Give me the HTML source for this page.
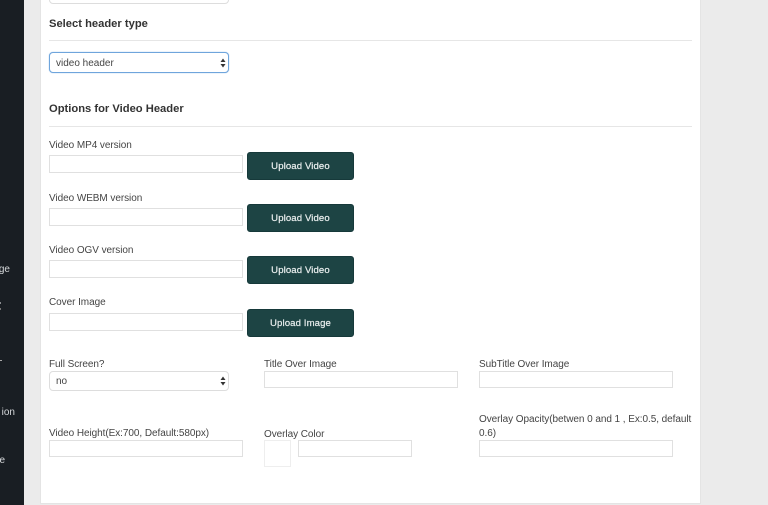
<!DOCTYPE html>
<html><head><meta charset="utf-8"><style>
html,body{margin:0;padding:0}
body{width:768px;height:505px;position:relative;overflow:hidden;background:#ebebeb;font-family:"Liberation Sans",sans-serif;color:#444;-webkit-font-smoothing:antialiased}
div{position:absolute;box-sizing:border-box}
.t{white-space:nowrap;font-size:10px;line-height:12px;color:#444;letter-spacing:-.06px}
.h{white-space:nowrap;font-size:11.2px;line-height:14px;font-weight:bold;color:#333}
.i{background:#fff;border:1px solid #e0e0e0;height:18px}
.l{height:17px}
.b{background:#1d4444;border:1px solid #16393a;border-radius:3px;color:#e9eeee;width:107px;height:28px;left:247px;font-size:9.6px;line-height:28px;text-align:center;font-weight:normal;letter-spacing:.1px;-webkit-text-stroke:.2px #e9eeee}
.s{background:#fff;border:1px solid #ddd;border-radius:4px;left:49px;width:180px;font-size:10px;color:#444;padding-left:6px}
.hr{height:1px;background:#e6e6e6;left:49px;width:643px}
.side{color:#d5d8da;font-size:10px;line-height:12px;white-space:nowrap;text-align:right}
svg{position:absolute}
</style></head><body>
<div style="left:0;top:0;width:24px;height:505px;background:#191e23;overflow:hidden">
<div class="side" style="right:14px;top:264px">ge</div>
<div style="left:0;top:302px;width:1px;height:2px;background:#8a8d90"></div>
<div style="left:0;top:308px;width:1px;height:2px;background:#777"></div>
<div style="left:0;top:360px;width:2px;height:1px;background:#aaa"></div>
<div class="side" style="right:9px;top:407px">ion</div>
<div class="side" style="right:19px;top:455px">e</div>
</div>
<div style="left:40px;top:-1px;width:661px;height:505px;background:#fff;border:1px solid #e4e4e4;border-top:none"></div>

<div class="s" style="top:-10px;height:14px"></div>
<div class="h" style="left:49px;top:17px">Select header type</div>
<div class="hr" style="top:40px"></div>
<div class="s" style="top:52px;height:21px;border:1px solid #6fa5dc;box-shadow:0 0 1px #8bb8e6;line-height:21px">video header
<svg style="left:170px;top:5px" width="6" height="10" viewBox="0 0 6 10"><path d="M3 0.5L5.5 4H.5zM3 9.5L.5 6h5z" fill="#333"/></svg></div>
<div class="h" style="left:49px;top:102px">Options for Video Header</div>
<div class="hr" style="top:126px"></div>

<div class="t" style="left:49px;top:140px">Video MP4 version</div>
<div class="i" style="left:49px;top:155px;width:194px"></div>
<div class="b" style="top:152px">Upload Video</div>

<div class="t" style="left:49px;top:193px">Video WEBM version</div>
<div class="i" style="left:49px;top:208px;width:194px"></div>
<div class="b" style="top:204px">Upload Video</div>

<div class="t" style="left:49px;top:245px">Video OGV version</div>
<div class="i" style="left:49px;top:260px;width:194px"></div>
<div class="b" style="top:256px">Upload Video</div>

<div class="t" style="left:49px;top:297px">Cover Image</div>
<div class="i" style="left:49px;top:313px;width:194px"></div>
<div class="b" style="top:309px">Upload Image</div>

<div class="t" style="left:49px;top:359px">Full Screen?</div>
<div class="s" style="top:371px;height:20px;line-height:20px">no
<svg style="left:170px;top:4px" width="6" height="10" viewBox="0 0 6 10"><path d="M3 0.5L5.5 4H.5zM3 9.5L.5 6h5z" fill="#333"/></svg></div>

<div class="t" style="left:264px;top:359px">Title Over Image</div>
<div class="i l" style="left:264px;top:371px;width:194px"></div>

<div class="t" style="left:479px;top:359px">SubTitle Over Image</div>
<div class="i l" style="left:479px;top:371px;width:194px"></div>

<div class="t" style="left:49px;top:428px">Video Height(Ex:700, Default:580px)</div>
<div class="i l" style="left:49px;top:440px;width:194px"></div>

<div class="t" style="left:264px;top:429px">Overlay Color</div>
<div style="left:264px;top:440px;width:27px;height:27px;background:#fff;border:1px solid #eee"></div>
<div class="i l" style="left:298px;top:440px;width:114px"></div>

<div class="t" style="left:479px;top:414px">Overlay Opacity(betwen 0 and 1 , Ex:0.5, default</div>
<div class="t" style="left:479px;top:428px">0.6)</div>
<div class="i l" style="left:479px;top:440px;width:194px"></div>
</body></html>
